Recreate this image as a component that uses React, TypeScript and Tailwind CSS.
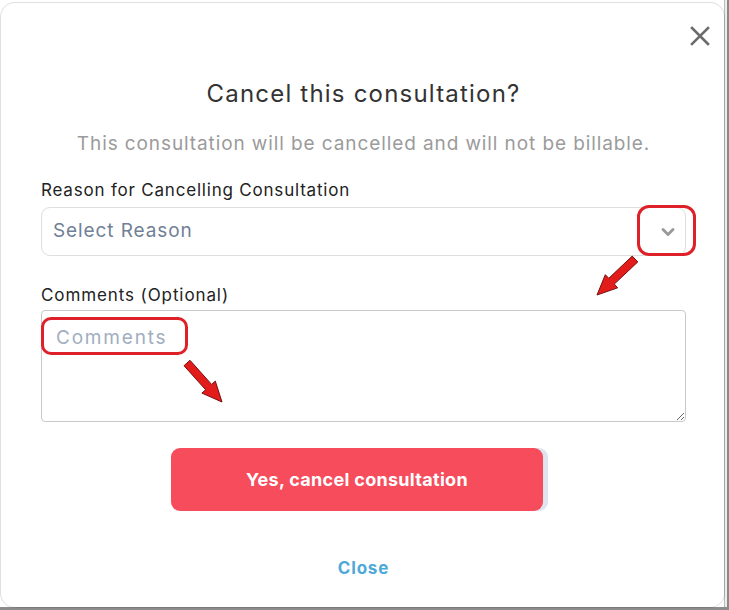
import React from "react";
import { ChevronDown } from "lucide-react";

function arrowPoints(tx: number, ty: number, hx: number, hy: number) {
  const dx = hx - tx;
  const dy = hy - ty;
  const len = Math.hypot(dx, dy);
  const ux = dx / len;
  const uy = dy / len;
  const px = -uy;
  const py = ux;
  const shaft = 4;
  const head = 9;
  const headLen = 20;
  const bx = hx - ux * headLen;
  const by = hy - uy * headLen;
  const pts = [
    [tx + px * shaft, ty + py * shaft],
    [bx + px * shaft, by + py * shaft],
    [bx + px * head, by + py * head],
    [hx, hy],
    [bx - px * head, by - py * head],
    [bx - px * shaft, by - py * shaft],
    [tx - px * shaft, ty - py * shaft],
  ];
  return pts.map((p) => p.map((v) => v.toFixed(1)).join(",")).join(" ");
}

export default function App() {
  const font = { fontFamily: "Inter, 'Noto Sans', sans-serif" };
  return (
    <div className="w-[729px] h-[610px] overflow-hidden bg-white flex flex-col" style={font}>
      <div className="flex flex-1">
        <div className="pt-[3px] pl-[1px]">
          <div className="relative w-[723px] h-[604px] rounded-[14px] bg-white shadow-[0_0_0_1px_rgba(0,0,0,0.12)] pl-[40px] pr-[38px] flex flex-col">
            <div className="flex justify-end pt-[23px] -mr-[24px]">
              <svg width="20" height="20" viewBox="0 0 20 20">
                <path d="M2 2 L18 18 M18 2 L2 18" stroke="#6b6b6b" strokeWidth="2.6" strokeLinecap="square" />
              </svg>
            </div>
            <div className="mt-[33px] text-center text-[24px] leading-[30px] tracking-[1.2px] text-[#333333]">
              Cancel this consultation?
            </div>
            <div className="mt-[22px] text-center text-[19px] leading-[26px] tracking-[0.9px] text-[#9b9b9b]">
              This consultation will be cancelled and will not be billable.
            </div>
            <div className="mt-[22px] text-[17px] leading-[22px] tracking-[0.8px] text-[#222222]">
              Reason for Cancelling Consultation
            </div>
            <div className="mt-[6px] h-[49px] border border-[#dedede] rounded-[9px] flex items-center justify-between pl-[11px] pr-[7px]">
              <span className="text-[19px] tracking-[0.9px] text-[#718096]">Select Reason</span>
              <ChevronDown size={20} strokeWidth={3.5} color="#9a9a9a" />
            </div>
            <div className="mt-[28px] text-[17px] leading-[22px] tracking-[0.9px] text-[#222222]">
              Comments (Optional)
            </div>
            <textarea
              className="mt-[4px] h-[112px] border border-[#c8c8c8] rounded-[4px] px-[14px] py-[14px] text-[19px] leading-[26px] tracking-[1.8px] placeholder:text-[#a0aec0] outline-none"
              placeholder="Comments"
              style={font}
            />
            <div className="mt-[26px] ml-[130px]">
              <button className="w-[372px] h-[63px] rounded-[9px] bg-[#f64c5c] text-white text-[18px] tracking-[0.3px] font-bold shadow-[5px_0_0_0_#dfe5ee]">
                Yes, cancel consultation
              </button>
            </div>
            <div className="mt-[45px] text-center text-[17px] leading-[24px] tracking-[0.8px] font-bold text-[#4fa9d8]">
              Close
            </div>

            <div className="absolute left-[636px] top-[202px] w-[59px] h-[51px] border-[3px] border-[#de2129] rounded-[12px] pointer-events-none" />
            <div className="absolute left-[40px] top-[314px] w-[147px] h-[38px] border-[3px] border-[#de2129] rounded-[10px] pointer-events-none" />
            <svg className="absolute left-0 top-0 pointer-events-none" width="723" height="604">
              <polygon points={arrowPoints(634, 256, 596, 292)} fill="#e21b1b" stroke="#7a0f0f" strokeWidth="1" />
              <polygon points={arrowPoints(186, 360, 221, 399)} fill="#e21b1b" stroke="#7a0f0f" strokeWidth="1" />
            </svg>
          </div>
        </div>
        <div className="flex-1 bg-[#ececec] border-l border-[#bbbbbb] flex justify-end">
          <div className="w-[2px] bg-[#8a8a8a]" />
        </div>
      </div>
      <div className="h-[3px] bg-[#8c8c8c]" />
    </div>
  );
}
